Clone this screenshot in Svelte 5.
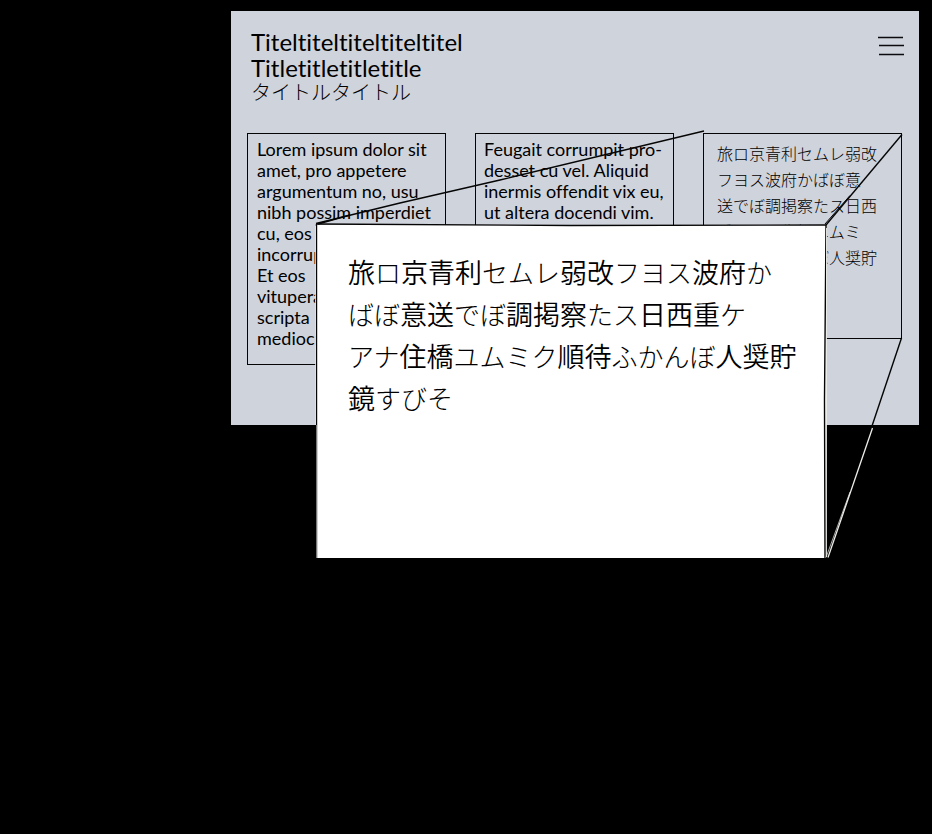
<script>
  const titles = ['Titeltiteltiteltiteltitel', 'Titletitletitletitle'];
  const titleJa = 'タイトルタイトル';

  const latin = [
    [
      'Lorem ipsum dolor sit',
      'amet, pro appetere',
      'argumentum no, usu',
      'nibh possim imperdiet',
      'cu, eos',
      'incorrup',
      'Et eos',
      'vitupera',
      'scripta',
      'mediocr'
    ],
    [
      'Feugait corrumpit pro-',
      'desset cu vel. Aliquid',
      'inermis offendit vix eu,',
      'ut altera docendi vim.'
    ]
  ];

  const small = [
    '旅ロ京青利セムレ弱改',
    'フヨス波府かばぼ意',
    '送でぼ調掲察たス日西',
    '重ケアナ住橋ユムミ',
    'ク順待ふかんぼ人奨貯'
  ];

  const large = [
    '旅ロ京青利セムレ弱改フヨス波府か',
    'ばぼ意送でぼ調掲察たス日西重ケ',
    'アナ住橋ユムミク順待ふかんぼ人奨貯',
    '鏡すびそ'
  ];

  // Kana are set lighter than kanji, so each line is cut into runs.
  const runs = (line) =>
    line.match(/[\u3040-\u30ff]+|[^\u3040-\u30ff]+/g).map((text) => ({
      text,
      kana: /[\u3040-\u30ff]/.test(text)
    }));
</script>

{#snippet japanese(lines)}
  {#each lines as line}
    <p>{#each runs(line) as run}<span class:kana={run.kana}>{run.text}</span>{/each}</p>
  {/each}
{/snippet}

<div class="stage">
  <main class="panel">
    <header>
      <div>
        <h1>
          {#each titles as title}<span>{title}</span>{/each}
        </h1>
        <p class="subtitle kana" lang="ja">{titleJa}</p>
      </div>
      <button aria-label="Menu">
        <svg width="26" height="20" viewBox="0 0 26 20" aria-hidden="true">
          <path d="M0 1.500H25M1 9.500H26M1 18.500H26" stroke="#0b0b0f" stroke-width="1.5" />
        </svg>
      </button>
    </header>

    <div class="columns">
      {#each latin as lines, i}
        <article class="card latin" class:second={i === 1}>
          {#each lines as line}<p>{line}</p>{/each}
        </article>
      {/each}
      <article class="card ja" lang="ja">
        {@render japanese(small)}
      </article>
    </div>
  </main>

  <section class="zoomed" lang="ja">
    {@render japanese(large)}
  </section>

  <svg class="wires" width="932" height="570" viewBox="0 0 932 570" fill="none" aria-hidden="true">
    <g stroke="#050505" stroke-width="1.4">
      <path d="M316 223.500L400 203L500 180L704 131" />
      <path d="M318 224L350 215" />
      <path d="M826 225L902 134.500" />
      <path d="M825 224L850 195.500" stroke-width="1" />
      <path d="M901.500 338L872 426" />
      <path d="M316.500 224L570 225.500L826 225L824.500 400L825 558" />
      <path d="M316.500 224V558" />
    </g>
    <g stroke="#eeeeea">
      <path d="M315.500 226V425" stroke-width=".8" />
      <path d="M316.500 425V558" stroke="#777" stroke-width="1" />
      <path d="M872.500 428L828 557.500" stroke-width="1.3" />
      <path d="M850 492L826 557.500" stroke-width=".7" />
      <path d="M826.500 228V557" stroke-width=".9" />
    </g>
  </svg>
</div>

<style>
  :global(body) {
    margin: 0;
    background: #000;
  }

  .stage {
    position: relative;
    box-sizing: border-box;
    min-height: 100vh;
    padding: 11px 13px 0 231px;
    overflow: hidden;
    color: #000;
    font-family: Lato, "Noto Sans CJK JP", sans-serif;
    font-variant-ligatures: none;
  }

  p,
  h1 {
    margin: 0;
    font-weight: 400;
    white-space: nowrap;
  }

  .panel {
    box-sizing: border-box;
    min-height: 414px;
    padding: 18px 17px 0 16px;
    background: #cfd3db;
  }

  header {
    display: flex;
    justify-content: space-between;
    align-items: flex-start;
    height: 104px;
    padding-left: 4px;
  }

  h1 {
    font-size: 24px;
    line-height: 26px;
  }

  h1 span {
    display: block;
  }

  .subtitle {
    font-size: 20px;
    line-height: 22px;
  }

  .ja p {
    font-weight: 300;
  }

  .zoomed p {
    font-weight: 350;
  }

  .subtitle.kana,
  .ja .kana,
  .zoomed .kana {
    font-family: "Noto Sans CJK JP", sans-serif;
    font-weight: 200;
  }

  button {
    margin: 7px -2px 0 0;
    padding: 0;
    border: 0;
    background: none;
  }

  button svg {
    display: block;
  }

  .columns {
    display: grid;
    grid-template-columns: repeat(3, minmax(0, 1fr));
    gap: 29px;
    align-items: start;
  }

  .card {
    box-sizing: border-box;
    border: 1px solid #050505;
  }

  .latin {
    padding: 5px 0 15px 9px;
    font-size: 18px;
    line-height: 21px;
  }

  .second {
    padding-left: 8px;
  }

  .ja {
    min-height: 206px;
    padding: 6px 0 0 13px;
    font-family: "Noto Sans CJK JP", sans-serif;
    font-size: 16px;
    line-height: 26px;
  }

  .zoomed {
    position: absolute;
    top: 225px;
    left: 316px;
    box-sizing: border-box;
    width: 510px;
    height: 333px;
    padding: 26px 0 0 32px;
    background: #fff;
    font-family: "Noto Sans CJK JP", sans-serif;
    font-size: 27px;
    line-height: 42px;
  }

  .zoomed .kana {
    font-size: 26px;
  }

  .wires {
    position: absolute;
    top: 0;
    left: 0;
    pointer-events: none;
  }
</style>
